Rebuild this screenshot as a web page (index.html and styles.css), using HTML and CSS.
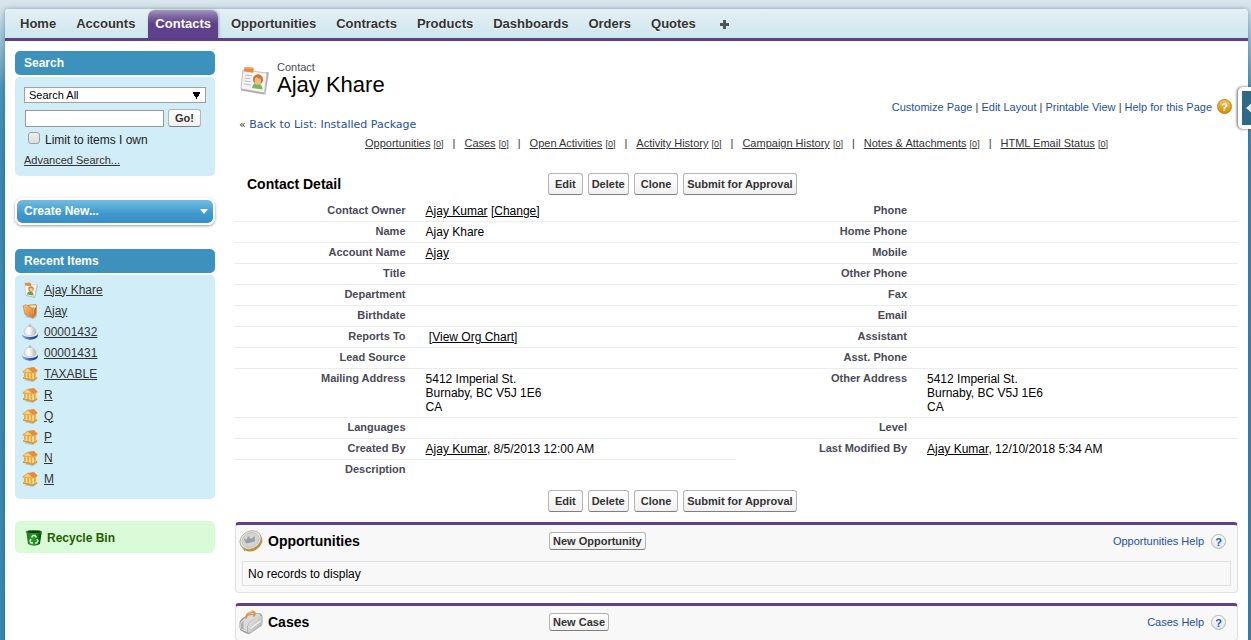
FILE: index.html
```html
<!DOCTYPE html>
<html lang="en">
<head>
<meta charset="utf-8">
<title>Contact: Ajay Khare</title>
<link rel="stylesheet" href="styles.css">
</head>
<body>
<svg class="defs" aria-hidden="true">
  <defs>
    <linearGradient id="gSilver" x1="0" y1="0" x2="1" y2="1"><stop offset="0" stop-color="#f4f4f4"/><stop offset="1" stop-color="#a9a9a9"/></linearGradient>
    <linearGradient id="gDome" x1="0" y1="0" x2="1" y2="0"><stop offset="0" stop-color="#dedede"/><stop offset=".4" stop-color="#fff"/><stop offset="1" stop-color="#b4b4b8"/></linearGradient>
    <linearGradient id="gOrange" x1="0" y1="0" x2="1" y2="1"><stop offset="0" stop-color="#fbc878"/><stop offset="1" stop-color="#d9792b"/></linearGradient>
    <linearGradient id="gGreen" x1="0" y1="0" x2="1" y2="0"><stop offset="0" stop-color="#1d7a22"/><stop offset=".5" stop-color="#2a9a28"/><stop offset="1" stop-color="#0c3d12"/></linearGradient>
    <linearGradient id="gBlue" x1="0" y1="0" x2="1" y2="0"><stop offset="0" stop-color="#8fb4e8"/><stop offset=".5" stop-color="#3a5cb8"/><stop offset="1" stop-color="#1d2f80"/></linearGradient>
  </defs>
  <symbol id="contact" viewBox="0 0 16 16">
    <path d="M4 4l12-1-3 13-9-2z" fill="#999" opacity=".6"/>
    <path d="M3 3l12-.5L12.500 15 3.500 13z" fill="#fafafa" stroke="#b8b8b8" stroke-width=".5"/>
    <path d="M2.500 1l5-.5 1.500 1v3l-5.500-1z" fill="#ee8c35"/>
    <circle cx="9" cy="7" r="2.800" fill="#dd873a"/><circle cx="9.200" cy="7.600" r="1.500" fill="#f6cfa0"/>
    <path d="M5 12.500q.5-3.500 3.500-3 3 0 3 4z" fill="#6aa343"/>
  </symbol>
  <symbol id="folder" viewBox="0 0 16 16">
    <path d="M3 14l9 2 3-3V5z" fill="#777" opacity=".35"/>
    <path d="M5 2l8-1 2 1-1 10-3 2z" fill="#cf8d4a"/>
    <path d="M6 3l7-1 1 1-2 9-3 1z" fill="#eee2c8"/>
    <path d="M1 3l3-1.500 1 1 5.500 2.500 1-.5L11 15l-8-3.500z" fill="url(#gOrange)" stroke="#c96f25" stroke-width=".5"/>
    <path d="M11 15l1.500-10 2-1-1 8z" fill="#b97437"/>
  </symbol>
  <symbol id="bell" viewBox="0 0 16 16">
    <path d="M.2 9.500v2C1 17 15 17 15.800 11.500v-2z" fill="url(#gBlue)"/>
    <ellipse cx="8" cy="9.700" rx="7.800" ry="3.300" fill="#e9eef6"/>
    <path d="M2 9V8A6 5.800 0 0 1 14 8V9C14 12.300 2 12.300 2 9z" fill="url(#gDome)" stroke="#b0b0b8" stroke-width=".5"/>
    <circle cx="8" cy="1.600" r="1.100" fill="#ccc" stroke="#999" stroke-width=".4"/>
  </symbol>
  <symbol id="bank" viewBox="0 0 16 16">
    <path d="M2 14l9 2 5-4-2-1z" fill="#777" opacity=".4"/>
    <path d="M1 11l10 2 4-2v1.500L11 15 1 12.700z" fill="#dc9b2e"/>
    <path d="M2 6l9 1 3.500-2v6L11 13 2 11z" fill="#f8dfa0"/>
    <path d="M2 6.500h1.800v5L2 11zM5.200 6.500H7v5.500l-1.800-.4zM8.500 6.800h1.700v6l-1.700-.4zM12 6.500l1.800-1v5.800l-1.800 1z" fill="#eaa83c"/>
    <path d="M.5 5.500L5 2l6 .5L15.500 4l-1 2.500L11 7.500.7 6.700z" fill="#efaa45"/>
    <path d="M5 2l7-1 3.700 4L11 6.800 7.500 3z" fill="#e38b41"/><path d="M2 5.400L5.500 3 9 6z" fill="#fcd988"/>
  </symbol>
  <symbol id="card" viewBox="0 0 30 30">
    <path d="M2 5l25 4-1 20L1 24z" fill="#999" opacity=".3"/>
    <path d="M26 6l3 .5-3.500 20.500-1.500-1z" fill="#b4b4b4"/>
    <path d="M3 4l24 3-2.500 20L1 23z" fill="#f4f4f4" stroke="#b5b5b5" stroke-width=".8"/>
    <path d="M1 23l23.500 4v1.500L1 24.500z" fill="#aaa"/>
    <path d="M4.500 1l8.500.5.800 1.300-.6 4L4 5.500z" fill="#ea8741"/><path d="M4.500 1l8.500.5v1.200l-9-.5z" fill="#f9b47c"/>
    <path d="M5 9l7 .8M4.600 12l6 .8M4.300 15l6 .8M4 18l7 1" stroke="#bdbdbd" stroke-width="1.100"/>
    <path d="M12 22q1-5 5-5 5 0 5.500 6.500z" fill="#76b85a"/>
    <circle cx="18" cy="13.500" r="5" fill="#b77438"/><ellipse cx="17.800" cy="15" rx="3.200" ry="4" fill="#f3bb83"/>
    <path d="M13 13q1-5 6-4.500 3 1 3.500 4-5 1-6-2-1 2-3.500 2.500z" fill="#c47f3a"/>
  </symbol>
  <symbol id="coin" viewBox="0 0 24 22">
    <ellipse cx="12.500" cy="12" rx="11.300" ry="9" transform="rotate(-28 12.500 12)" fill="#c99232"/>
    <path d="M5 20l1 1M8 19.500l1 1M12 19l1 1.300M16 17l1 1.300M19 14l1.500 1" stroke="#8a6424" stroke-width=".7"/>
    <ellipse cx="11.500" cy="10" rx="11" ry="8.700" transform="rotate(-28 11.500 10)" fill="#eee" stroke="#999" stroke-width=".7"/>
    <ellipse cx="11.500" cy="10" rx="9" ry="7" transform="rotate(-28 11.500 10)" fill="#d4d4d4" stroke="#bba97c" stroke-width=".5"/>
    <path d="M4.500 8l3 2 1.500-4 3 3 3.500-3 .5 5.500-9 2z" fill="#999ea3"/>
  </symbol>
  <symbol id="case" viewBox="0 0 24 24">
    <path d="M.5 12Q1 10 3 8.500L9 4.500 19 3q4 0 4.500 4v6q0 2-2 3.500L12 23q-2 1.500-4.500.5l-5-2.500Q.5 20 .5 17z" fill="#9c9c9c"/>
    <path d="M1.500 12L8 6l11-2.500 3 1.500L12 11q-3 2-3.500 5L8 22l-5-2q-2-1-2-3z" fill="#dadada"/>
    <path d="M8.500 22l.5-6q.5-3 3-4.500L20.500 5.500Q23 5 23 8v5q0 2-1.500 3L12 22.500q-2 1-3.500-.5z" fill="url(#gSilver)"/>
    <path d="M11.500 18.500L21.500 11" stroke="#fff" stroke-width="1.500" opacity=".7"/>
    <path d="M2 13.500L4.500 11v9L2 18.500z" fill="#aeaeae"/>
    <path d="M6.500 8.500L8.500 4 14 1.500l2 2-1.500 3" fill="none" stroke="#e98f3a" stroke-width="2"/>
    <path d="M8.500 3.500L14 1" stroke="#f9c58c" stroke-width=".8"/>
  </symbol>
  <symbol id="bin" viewBox="0 0 16 16">
    <path d="M.3 1.500h15.400L14 14q-6 3.500-12 0z" fill="url(#gGreen)"/>
    <ellipse cx="8" cy="1.900" rx="7.600" ry="1.700" fill="#0c3a11" stroke="#3a8f35" stroke-width=".8"/>
    <path d="M5.500 7.500L7 5.500h2l1.500 2M11 9l1 2-1.300 2H9M7 13H5l-1-2 1-2" fill="none" stroke="#d8f3cf" stroke-width="1.500"/>
  </symbol>
</svg>

<div class="page">
  <nav class="tabs" aria-label="Main">
    <a class="tab" href="#">Home</a>
    <a class="tab" href="#">Accounts</a>
    <a class="tab tab-current" href="#" aria-current="page">Contacts</a>
    <a class="tab" href="#">Opportunities</a>
    <a class="tab" href="#">Contracts</a>
    <a class="tab" href="#">Products</a>
    <a class="tab" href="#">Dashboards</a>
    <a class="tab" href="#">Orders</a>
    <a class="tab" href="#">Quotes</a>
    <a class="tab tab-more" href="#" aria-label="All tabs"><svg width="9" height="9" viewBox="0 0 9 9"><path d="M3 0h3v3h3v3H6v3H3V6H0V3h3z" fill="#555"/></svg></a>
  </nav>

  <div class="columns">
    <aside class="sidebar">
      <section class="module">
        <h2 class="module-title">Search</h2>
        <form class="module-body search">
          <select class="search-scope" aria-label="Search scope"><option>Search All</option></select>
          <div class="search-row">
            <input class="search-text" type="text" aria-label="Search text">
            <button class="btn btn-go" type="button">Go!</button>
          </div>
          <label class="search-own"><input class="check" type="checkbox"> Limit to items I own</label>
          <a class="search-advanced" href="#">Advanced Search...</a>
        </form>
      </section>

      <button class="create" type="button">Create New...<span class="create-arrow"></span></button>

      <section class="module">
        <h2 class="module-title">Recent Items</h2>
        <ul class="module-body recent">
          <li class="recent-item"><svg class="icon"><use href="#contact"/></svg><a href="#">Ajay Khare</a></li>
          <li class="recent-item"><svg class="icon"><use href="#folder"/></svg><a href="#">Ajay</a></li>
          <li class="recent-item"><svg class="icon"><use href="#bell"/></svg><a href="#">00001432</a></li>
          <li class="recent-item"><svg class="icon"><use href="#bell"/></svg><a href="#">00001431</a></li>
          <li class="recent-item"><svg class="icon"><use href="#bank"/></svg><a href="#">TAXABLE</a></li>
          <li class="recent-item"><svg class="icon"><use href="#bank"/></svg><a href="#">R</a></li>
          <li class="recent-item"><svg class="icon"><use href="#bank"/></svg><a href="#">Q</a></li>
          <li class="recent-item"><svg class="icon"><use href="#bank"/></svg><a href="#">P</a></li>
          <li class="recent-item"><svg class="icon"><use href="#bank"/></svg><a href="#">N</a></li>
          <li class="recent-item"><svg class="icon"><use href="#bank"/></svg><a href="#">M</a></li>
        </ul>
      </section>

      <a class="recycle" href="#"><svg class="icon"><use href="#bin"/></svg>Recycle Bin</a>
    </aside>

    <main class="main">
      <header class="title">
        <svg class="title-icon"><use href="#card"/></svg>
        <div>
          <p class="title-type">Contact</p>
          <h1 class="title-name">Ajay Khare</h1>
        </div>
      </header>
      <div class="page-links">
        <span><a href="#">Customize Page</a> | <a href="#">Edit Layout</a> | <a href="#">Printable View</a> | <a href="#">Help for this Page</a></span>
        <span class="help help-gold">?</span>
      </div>
      <p class="back">« <a href="#">Back to List: Installed Package</a></p>

      <ul class="jump">
        <li><a href="#">Opportunities</a> <span class="count">[<u>0</u>]</span></li>
        <li><a href="#">Cases</a> <span class="count">[<u>0</u>]</span></li>
        <li><a href="#">Open Activities</a> <span class="count">[<u>0</u>]</span></li>
        <li><a href="#">Activity History</a> <span class="count">[<u>0</u>]</span></li>
        <li><a href="#">Campaign History</a> <span class="count">[<u>0</u>]</span></li>
        <li><a href="#">Notes &amp; Attachments</a> <span class="count">[<u>0</u>]</span></li>
        <li><a href="#">HTML Email Status</a> <span class="count">[<u>0</u>]</span></li>
      </ul>

      <section class="detail">
        <div class="bar bar-top">
          <h2 class="bar-title">Contact Detail</h2>
          <div class="bar-buttons">
            <button class="btn btn-wide" type="button">Edit</button>
            <button class="btn" type="button">Delete</button>
            <button class="btn btn-wide" type="button">Clone</button>
            <button class="btn" type="button">Submit for Approval</button>
          </div>
        </div>
        <table class="fields">
          <colgroup><col class="col-label"><col class="col-value"><col class="col-label"><col class="col-value"></colgroup>
          <tbody>
            <tr><th scope="row">Contact Owner</th><td><a href="#">Ajay Kumar</a> <a href="#">[Change]</a></td><th scope="row">Phone</th><td></td></tr>
            <tr><th scope="row">Name</th><td>Ajay Khare</td><th scope="row">Home Phone</th><td></td></tr>
            <tr><th scope="row">Account Name</th><td><a href="#">Ajay</a></td><th scope="row">Mobile</th><td></td></tr>
            <tr><th scope="row">Title</th><td></td><th scope="row">Other Phone</th><td></td></tr>
            <tr><th scope="row">Department</th><td></td><th scope="row">Fax</th><td></td></tr>
            <tr><th scope="row">Birthdate</th><td></td><th scope="row">Email</th><td></td></tr>
            <tr><th scope="row">Reports To</th><td>&nbsp;[<a href="#">View Org Chart</a>]</td><th scope="row">Assistant</th><td></td></tr>
            <tr><th scope="row">Lead Source</th><td></td><th scope="row">Asst. Phone</th><td></td></tr>
            <tr><th scope="row">Mailing Address</th><td>5412 Imperial St.<br>Burnaby, BC V5J 1E6<br>CA</td><th scope="row">Other Address</th><td>5412 Imperial St.<br>Burnaby, BC V5J 1E6<br>CA</td></tr>
            <tr><th scope="row">Languages</th><td></td><th scope="row">Level</th><td></td></tr>
            <tr><th scope="row">Created By</th><td><a href="#">Ajay Kumar</a>, 8/5/2013 12:00 AM</td><th class="last" scope="row">Last Modified By</th><td class="last"><a href="#">Ajay Kumar</a>, 12/10/2018 5:34 AM</td></tr>
            <tr><th class="last" scope="row">Description</th><td class="last"></td></tr>
          </tbody>
        </table>
        <div class="bar">
          <span></span>
          <div class="bar-buttons">
            <button class="btn btn-wide" type="button">Edit</button>
            <button class="btn" type="button">Delete</button>
            <button class="btn btn-wide" type="button">Clone</button>
            <button class="btn" type="button">Submit for Approval</button>
          </div>
        </div>
      </section>

      <section class="related">
        <div class="related-head">
          <h2 class="related-title"><svg class="related-icon"><use href="#coin"/></svg>Opportunities</h2>
          <button class="btn btn-low" type="button">New Opportunity</button>
          <a class="related-help" href="#">Opportunities Help <span class="help">?</span></a>
        </div>
        <p class="related-empty">No records to display</p>
      </section>

      <section class="related">
        <div class="related-head">
          <h2 class="related-title"><svg class="related-icon"><use href="#case"/></svg>Cases</h2>
          <button class="btn btn-low" type="button">New Case</button>
          <a class="related-help" href="#">Cases Help <span class="help">?</span></a>
        </div>
      </section>
    </main>
  </div>
</div>

<button class="drawer" type="button" aria-label="Open sidebar"><span class="drawer-face"><svg width="9" height="14" viewBox="0 0 9 14"><path d="M0 7l7-6h2v12H7z" fill="#e4e9ec"/></svg></span></button>
</body>
</html>
```
FILE: styles.css
```css
* { box-sizing: border-box; }

body {
  margin: 0;
  height: 100vh;
  padding: 9px 3px 0 5px;
  overflow: hidden auto;
  scrollbar-width: none;
  background: linear-gradient(#dae6ed 0, #cfdfe7 12px, #9fc4d6 36px, #4a93b9 90px, #3c8ab4 160px, #3c88b0 100%);
  color: #000;
  font: 12px/14px "Liberation Sans", Arial, sans-serif;
}

h1, h2, p, ul { margin: 0; padding: 0; }
ul { list-style: none; }
.defs { position: absolute; width: 0; height: 0; }

.page {
  min-height: 100%;
  background: #fff;
  border-radius: 4px 4px 0 0;
  box-shadow: 0 0 5px rgba(0, 40, 70, .35);
}

/* Tab bar */
.tabs {
  display: flex;
  gap: 6px;
  padding: 1px 8px 0;
  border-bottom: 3px solid #5e418a;
  border-radius: 4px 4px 0 0;
  background: linear-gradient(#e4f0f5, #cde6ed);
}
.tab {
  padding: 6px 7px;
  color: #333;
  font-size: 13px;
  font-weight: bold;
  line-height: 16px;
  text-decoration: none;
  text-shadow: 0 1px 1px #fff;
}
.tab-current {
  border-radius: 7px 7px 0 0;
  background: linear-gradient(#a595bf 0, #7f68a3 6px, #5e418a 14px);
  box-shadow: 1px 0 3px rgba(0, 0, 0, .25);
  color: #fff;
  text-shadow: none;
}
.tab-more { display: flex; align-items: center; padding: 0 11px; }

.columns { display: flex; gap: 20px; padding: 10px 10px 0; }

/* Sidebar */
.sidebar { flex: none; width: 200px; }
.module-title {
  margin-bottom: 2px;
  padding: 5px 9px;
  border-radius: 5px;
  background: #3c91bd;
  color: #fff;
  font-size: 12px;
  line-height: 14px;
}
.module-body { border-radius: 5px; background: #d1edf7; }

.search { padding: 10px 9px 9px; }
.search-scope {
  display: block;
  width: 100%;
  height: 16px;
  padding: 0 4px;
  border: 1px solid #a0a0a0;
  appearance: none;
  background: #fff conic-gradient(from -30deg at 50% 100%, #000 60deg, transparent 0) right 5px center / 7px 7px no-repeat;
  color: #000;
  font: 11px/14px "Liberation Sans", Arial, sans-serif;
}
.search-row { display: flex; gap: 4px; align-items: center; padding: 6px 5px 0 1px; }
.search-text { flex: 1; width: 0; min-width: 0; height: 17px; border: 1px solid #999; background: #fff; }
.search-own { display: flex; gap: 5px; align-items: center; padding: 5px 4px; color: #222; }
.check {
  width: 12px;
  height: 12px;
  margin: 0 0 4px;
  border: 1px solid #a0a0a0;
  border-radius: 3px;
  appearance: none;
  background: linear-gradient(#eee, #ddd);
}
.search-advanced { display: block; color: #333; font-size: 11px; }

.create {
  display: flex;
  align-items: center;
  justify-content: space-between;
  width: 100%;
  margin: 22px 0 24px;
  padding: 4px 5px 4px 7px;
  border: 2px solid #fff;
  border-radius: 7px;
  background: linear-gradient(#70bde0, #3f98cd 60%, #3a8dc6) padding-box;
  box-shadow: 0 1px 3px rgba(0, 0, 0, .4);
  color: #fff;
  font: bold 12px/15px "Liberation Sans", Arial, sans-serif;
}
.create-arrow { border: 4px solid transparent; border-top: 5px solid #fff; border-bottom: 0; }

.recent { padding: 4px 7px 10px; }
.recent-item { display: flex; gap: 6px; align-items: center; height: 21px; }
.recent-item a { color: #333; }
.icon { width: 16px; height: 16px; }

.recycle {
  display: flex;
  gap: 5px;
  align-items: center;
  margin-top: 22px;
  padding: 9px 11px 7px;
  border-radius: 5px;
  background: #d9fbd8;
  color: #265c00;
  font-weight: bold;
  line-height: 16px;
  text-decoration: none;
}

/* Page header */
.main { flex: 1; min-width: 0; }
.title { display: flex; gap: 7px; align-items: flex-end; padding: 9px 5px 0; }
.title-icon { width: 30px; height: 30px; }
.title-type { color: #4a4a56; font-size: 11px; line-height: 14px; }
.title-name { font-size: 22px; font-weight: normal; line-height: 22px; }
.page-links {
  display: flex;
  gap: 5px;
  align-items: center;
  justify-content: flex-end;
  padding: 3px 6px 0;
  color: #333;
  font-size: 11px;
}
.page-links a { color: #1f4fa0; text-decoration: none; }
.help {
  width: 15px;
  height: 15px;
  border: 1px solid #b5b5b5;
  border-radius: 50%;
  background: linear-gradient(#fff, #e4e4e4);
  color: #2255cc;
  font-size: 11px;
  font-weight: bold;
  line-height: 14px;
  text-align: center;
}
.help-gold { border-color: #c67c00; background: linear-gradient(#f3c25a, #dc8a00); color: #fff; }
.back { padding: 4px 4px 0; color: #333; font: 11px/14px "DejaVu Sans", Verdana, sans-serif; }
.back a { color: #1f4fa0; text-decoration: none; }

.jump { display: flex; flex-wrap: wrap; justify-content: center; padding-top: 4px; color: #333; font-size: 11px; }
.jump a { color: #333; }
.jump li + li::before { content: "|"; padding: 0 9px; }
.count { font-size: 9px; }

/* Detail block */
.bar { display: grid; grid-template-columns: 30% 1fr; gap: 12px; align-items: center; padding: 9px 0 5px; }
.bar-top { padding: 22px 0 6px; }
.bar-title { padding-left: 12px; font-size: 14px; line-height: 16px; }
.bar-buttons { display: flex; gap: 5px; }
.btn {
  height: 22px;
  padding: 0 3px;
  border: 1px solid #b5b5b5;
  border-bottom-color: #7f7f7f;
  border-radius: 3px;
  background: linear-gradient(#fff, #f0f0f0);
  color: #333;
  font: bold 11px/16px "Liberation Sans", Arial, sans-serif;
}
.btn-wide { padding: 0 6px; }
.btn-low { height: 18px; }
.btn-go { height: 18px; padding: 0 6px; }

.fields { width: 100%; border-collapse: separate; border-spacing: 0; table-layout: fixed; }
.col-label { width: 18%; }
.col-value { width: 32%; }
.fields th, .fields td { height: 21px; padding: 3px 10px; border-bottom: 1px solid #ececec; vertical-align: top; }
.fields th { padding-top: 2px; color: #4a4a56; font-size: 11px; text-align: right; }
.fields td { text-align: left; }
.fields a { color: #000; }
.fields .last { border-bottom: 0; }

/* Related lists */
.related {
  margin-bottom: 10px;
  padding: 0 6px 6px;
  border: 1px solid #dfe1e5;
  border-top: 3px solid #5e418a;
  border-radius: 4px;
  background: #f8f8f8;
}
.detail + .related { margin-top: 5px; }
.related-head { display: grid; grid-template-columns: 31% 1fr auto; column-gap: 2px; align-items: center; padding: 4px 5px 0 0; }
.related-title {
  display: flex;
  gap: 5px;
  align-items: center;
  margin-left: -3px;
  font-size: 14px;
  line-height: 16px;
}
.related-icon { width: 24px; height: 24px; }
.related-head .btn { justify-self: start; }
.related-help {
  display: flex;
  gap: 7px;
  align-items: center;
  color: #1f4fa0;
  font-size: 11px;
  text-decoration: none;
}
.related-empty { margin-top: 8px; padding: 5px 5px 4px; border: 1px solid #e0e0e0; }

/* Side drawer handle, over the page edge */
.drawer {
  position: absolute;
  top: 87px;
  right: 0;
  padding: 4px 0 4px 4px;
  border: 0;
  border-radius: 5px 0 0 5px;
  background: #fff;
  box-shadow: -1px 0 3px rgba(0, 0, 0, .6);
}
.drawer-face { display: flex; align-items: center; width: 9px; height: 34px; padding-left: 4px; overflow: hidden; background: #2d6a88; }
.drawer-face svg { flex: none; }
```
